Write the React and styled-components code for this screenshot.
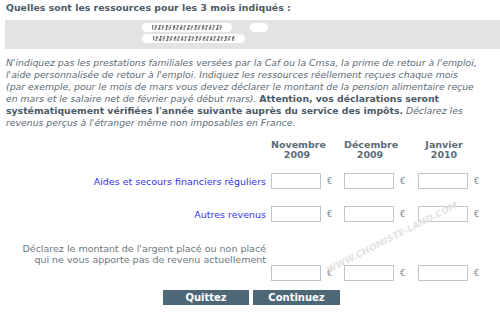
import React from "react";
import styled, { createGlobalStyle } from "styled-components";

const Global = createGlobalStyle`
  html, body { margin: 0; padding: 0; background: #ffffff; }
  body { font-family: "DejaVu Sans", Verdana, sans-serif; }
`;

const Page = styled.div`
  width: 500px;
  height: 312px;
  position: relative;
  overflow: hidden;
  padding: 2px 0 0 5px;
  box-sizing: border-box;
`;

const Title = styled.h1`
  margin: 0 0 0 1px;
  font-size: 9.3px;
  line-height: 12px;
  font-weight: bold;
  letter-spacing: 0.05px;
  color: #4b5a66;
`;

const InfoBox = styled.div`
  margin-top: 6px;
  height: 29px;
  background: #e3e3e3;
  position: relative;
`;

const Redacted = styled.div`
  position: absolute;
  left: ${(p) => p.$left}px;
  top: ${(p) => p.$top}px;
  width: ${(p) => p.$width}px;
  height: 9px;
  border-radius: 5px;
  background: #ffffff;
  filter: blur(0.6px);
  display: flex;
  align-items: center;
  justify-content: center;
`;

const Smudge = styled.div`
  width: ${(p) => p.$width}px;
  height: 5px;
  background: repeating-linear-gradient(105deg, #666 0 1.5px, #d8d8d8 1.5px 3.5px, #888 3.5px 5px, #f0f0f0 5px 7px);
  filter: blur(0.7px);
  opacity: 0.85;
`;

const Paragraph = styled.p`
  margin: 8px 0 0 1px;
  font-size: 9.3px;
  line-height: 12px;
  font-style: italic;
  color: #5b6c78;
  white-space: nowrap;

  strong {
    font-style: normal;
    font-weight: bold;
    color: #4b5a66;
  }
`;

const Row = styled.div`
  display: grid;
  grid-template-columns: 266px 73px 74px 74px;
  align-items: ${(p) => p.$align || "center"};
  margin-top: ${(p) => p.$top}px;
`;

const Header = styled.div`
  width: 52px;
  text-align: center;
  font-size: 9.5px;
  line-height: 10px;
  font-weight: bold;
  color: #5b6b77;
`;

const Label = styled.div`
  text-align: right;
  font-size: 9.5px;
  line-height: 11px;
  color: ${(p) => (p.$muted ? "#6b7880" : "#3434e8")};
  padding-right: 5px;
  margin-bottom: ${(p) => p.$bottom || 0}px;
`;

const Cell = styled.div`
  display: flex;
  align-items: center;
  gap: 6px;
`;

const Input = styled.input`
  box-sizing: border-box;
  width: 50px;
  height: 16px;
  margin: 0;
  padding: 0 2px;
  border: 1px solid #bfc6ca;
  background: #ffffff;
  font: 9px "DejaVu Sans", sans-serif;
`;

const Euro = styled.span`
  font-size: 8.5px;
  color: #7c8890;
`;

const Buttons = styled.div`
  display: flex;
  justify-content: center;
  gap: 4px;
  margin-top: 9px;
  padding-right: 2px;
`;

const Button = styled.button`
  width: ${(p) => p.$width}px;
  height: 15px;
  padding: 0;
  border: none;
  background: #4f6878;
  color: #ffffff;
  font: bold 10px "DejaVu Sans", sans-serif;
  line-height: 15px;
`;

const Watermark = styled.div`
  position: absolute;
  left: 325px;
  top: 266px;
  font-size: 9px;
  font-weight: bold;
  font-style: italic;
  color: #e2e2e2;
  letter-spacing: 0.1px;
  transform: rotate(-27deg);
  transform-origin: left top;
  pointer-events: none;
  white-space: nowrap;
`;

const months = [
  ["Novembre", "2009"],
  ["Décembre", "2009"],
  ["Janvier", "2010"],
];

function Inputs() {
  return months.map((m) => (
    <Cell key={m[0]}>
      <Input type="text" />
      <Euro>€</Euro>
    </Cell>
  ));
}

export default function App() {
  return (
    <>
      <Global />
      <Page>
        <Title>Quelles sont les ressources pour les 3 mois indiqués :</Title>
        <InfoBox>
          <Redacted $left={137} $top={3} $width={90}>
            <Smudge $width={70} />
          </Redacted>
          <Redacted $left={245} $top={3} $width={18} />
          <Redacted $left={137} $top={14} $width={103}>
            <Smudge $width={82} />
          </Redacted>
        </InfoBox>
        <Paragraph>
          N'indiquez pas les prestations familiales versées par la Caf ou la Cmsa, la prime de retour à l'emploi,
          <br />
          l'aide personnalisée de retour à l'emploi. Indiquez les ressources réellement reçues chaque mois
          <br />
          (par exemple, pour le mois de mars vous devez déclarer le montant de la pension alimentaire reçue
          <br />
          en mars et le salaire net de février payé début mars). <strong>Attention, vos déclarations seront</strong>
          <br />
          <strong>systématiquement vérifiées l'année suivante auprès du service des impôts.</strong> Déclarez les
          <br />
          revenus perçus à l'étranger même non imposables en France.
        </Paragraph>
        <Row $top={11}>
          <span />
          {months.map((m) => (
            <Header key={m[0]}>
              {m[0]}
              <br />
              {m[1]}
            </Header>
          ))}
        </Row>
        <Row $top={13}>
          <Label>Aides et secours financiers réguliers</Label>
          <Inputs />
        </Row>
        <Row $top={17}>
          <Label>Autres revenus</Label>
          <Inputs />
        </Row>
        <Row $top={21} $align="end">
          <Label $muted $bottom={16}>
            Déclarez le montant de l'argent placé ou non placé
            <br />
            qui ne vous apporte pas de revenu actuellement
          </Label>
          <Inputs />
        </Row>
        <Buttons>
          <Button $width={86}>Quittez</Button>
          <Button $width={87}>Continuez</Button>
        </Buttons>
        <Watermark>WWW.CHOMISTE-LAND.COM</Watermark>
      </Page>
    </>
  );
}
